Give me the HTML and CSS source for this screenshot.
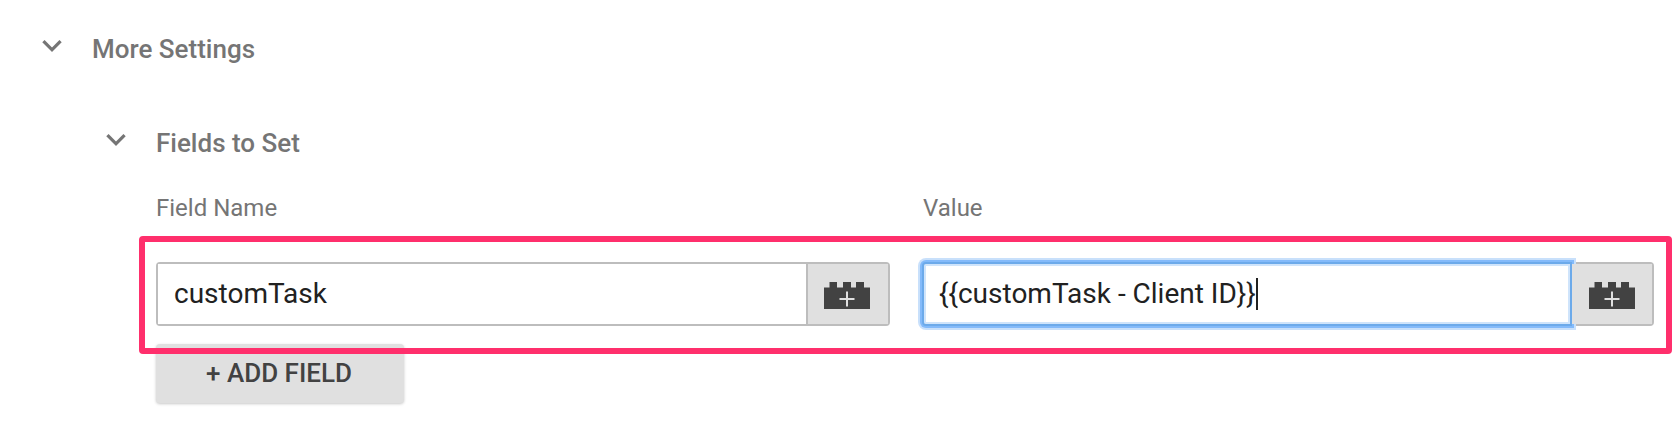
FILE: index.html
```
<!DOCTYPE html>
<html lang="en">
<head>
<meta charset="utf-8">
<title>More Settings</title>
<link rel="stylesheet" href="styles.css">
</head>
<body>
<main class="settings">
  <div class="section-head">
    <svg class="chevron" viewBox="6 8.59 12 7.41"><path d="M16.59 8.59L12 13.17 7.41 8.59 6 10l6 6 6-6z"/></svg>
    <h2 class="title">More Settings</h2>
  </div>
  <section class="subsection">
    <div class="section-head">
      <svg class="chevron" viewBox="6 8.59 12 7.41"><path d="M16.59 8.59L12 13.17 7.41 8.59 6 10l6 6 6-6z"/></svg>
      <h3 class="title">Fields to Set</h3>
    </div>
    <div class="fields">
      <div class="grid labels"><span>Field Name</span><span>Value</span></div>
      <div class="grid row">
        <div class="group">
          <div class="input">customTask</div>
          <div class="picker">
            <svg class="brick" viewBox="0 0 46 27"><path class="body" d="M0 5.5H5.5V0H13V5.5H19V0H27V5.5H32V0H40V5.5H46V27H0z"/><path class="plus" d="M15.5 17H30.5M23 9.5V24.5"/></svg>
          </div>
        </div>
        <div class="group">
          <div class="input focused">{{customTask - Client ID}}<span class="caret"></span></div>
          <div class="picker">
            <svg class="brick" viewBox="0 0 46 27"><path class="body" d="M0 5.5H5.5V0H13V5.5H19V0H27V5.5H32V0H40V5.5H46V27H0z"/><path class="plus" d="M15.5 17H30.5M23 9.5V24.5"/></svg>
          </div>
        </div>
      </div>
      <button class="add" type="button">+ ADD FIELD</button>
    </div>
  </section>
  <div class="highlight"></div>
</main>
</body>
</html>
```

FILE: styles.css
```
* { box-sizing: border-box; }
body {
  margin: 0;
  background: #fff;
  font-family: Roboto, "Liberation Sans", sans-serif;
  color: #212121;
}
.settings {
  position: relative;
  height: 428px;
  padding: 33px 0 0 42px;
  overflow: hidden;
}
.section-head {
  display: flex;
  align-items: flex-start;
  gap: 30px;
  height: 32px;
}
.chevron {
  width: 20px;
  height: 12px;
  margin-top: 7px;
  fill: #757575;
}
.title {
  margin: 0;
  font-size: 26px;
  line-height: 32px;
  font-weight: 500;
  color: #757575;
  white-space: nowrap;
}
.subsection { padding: 62px 0 0 64px; }
.fields {
  padding: 35px 0 0 50px;
}
.grid {
  display: grid;
  grid-template-columns: 734px 732px;
  column-gap: 32px;
}
.labels {
  font-size: 24px;
  line-height: 28px;
  color: #757575;
}
.labels span + span { padding-left: 1px; }
.row { margin-top: 40px; }
.group {
  display: flex;
  height: 64px;
  border: 2px solid #bdbdbd;
  border-radius: 4px;
  background: #e0e0e0;
}
.input {
  display: flex;
  align-items: center;
  flex: 1;
  padding-left: 16px;
  border-right: 2px solid #bdbdbd;
  background: #fff;
  font-size: 28px;
  line-height: 60px;
  white-space: nowrap;
}
.input.focused {
  margin: -2px 0 -2px -2px;
  padding-left: 15px;
  border: 2px solid #6caaea;
  border-radius: 4px 0 0 4px;
  box-shadow: 0 0 0 2px #83bafa, 0 0 0 4px #c8e0fb, inset 0 0 0 2px #cfe4fb;
}
.caret {
  width: 2px;
  height: 32px;
  background: #212121;
}
.picker {
  position: relative;
  display: flex;
  align-items: center;
  justify-content: center;
  width: 80px;
  padding: 3px 2px 0 0;
  background: #e0e0e0;
}
.focused + .picker { padding-right: 0; }
.brick {
  width: 46px;
  height: 27px;
}
.body { fill: #424242; }
.plus { fill: none; stroke: #e0e0e0; stroke-width: 2; }
.add {
  display: block;
  width: 248px;
  height: 59px;
  margin: 18px 0 0;
  padding: 0 2px 0 0;
  border: 0;
  border-radius: 4px;
  background: #e0e0e0;
  box-shadow: 0 1px 3px rgba(0, 0, 0, .22);
  font: 500 26px/59px Roboto, "Liberation Sans", sans-serif;
  color: #424242;
}
/* Annotation frame drawn over the form row */
.highlight {
  position: absolute;
  left: 139px;
  top: 236px;
  width: 1533px;
  height: 117.5px;
  border: 6px solid #ff2f6c;
  border-radius: 4px;
}
```
